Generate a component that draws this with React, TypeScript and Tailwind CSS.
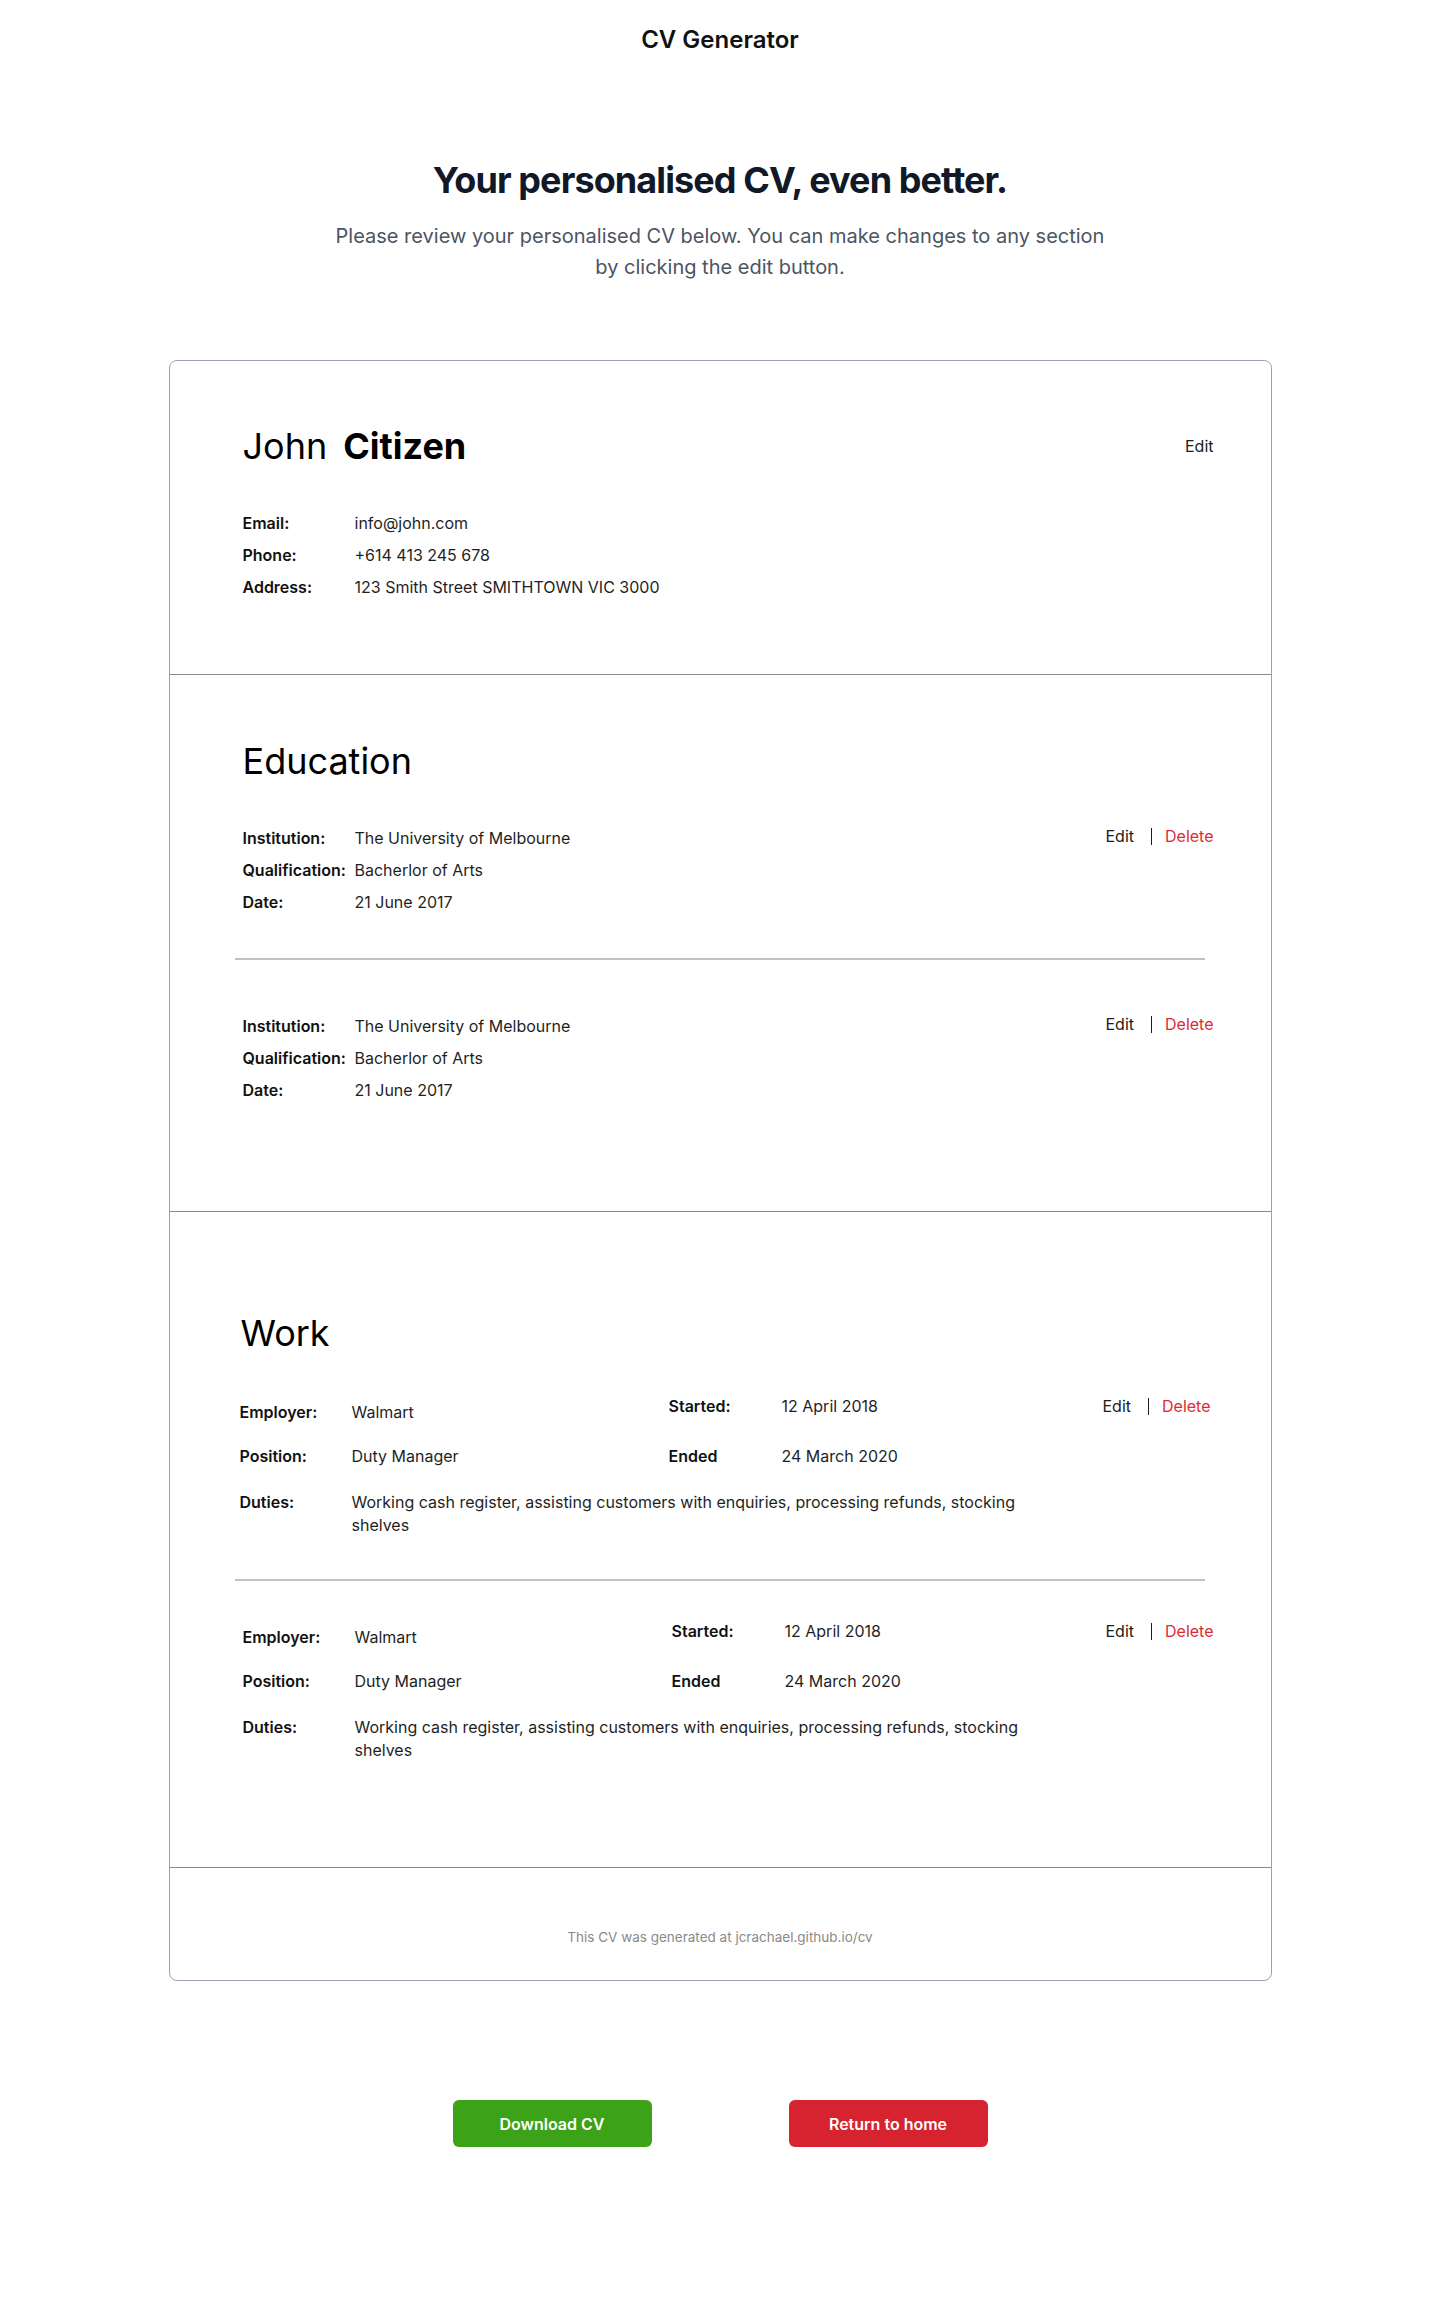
import React from "react";

type Row = { label: string; value: string };

function EditDelete({ onlyEdit = false }: { onlyEdit?: boolean }) {
  return (
    <div className="flex h-[22px] items-center text-[16px] leading-[22px]">
      <span className="text-[#1c1c1c]">Edit</span>
      {!onlyEdit && (
        <>
          <span className="ml-[17px] h-[17px] w-px bg-[#1c1c1c]" />
          <span className="ml-[13px] text-[#dc2b34]">Delete</span>
        </>
      )}
    </div>
  );
}

function Details({ rows }: { rows: Row[] }) {
  return (
    <div className="flex flex-col text-[16px]">
      {rows.map((r) => (
        <div key={r.label} className="flex h-8 items-center">
          <span className="w-[112px] shrink-0 font-semibold text-[#111]">{r.label}</span>
          <span className="text-[#1f1f1f]">{r.value}</span>
        </div>
      ))}
    </div>
  );
}

function Divider({ className = "" }: { className?: string }) {
  return <div className={`h-[2px] bg-[#c2c2c2] ${className}`} />;
}

function WorkItem({ className = "" }: { className?: string }) {
  return (
    <div className={`flex items-start text-[16px] leading-[22px] ${className}`}>
      <div className="flex-1">
        <div className="flex">
          <div className="w-[429px]">
            <div className="mt-[6px] flex">
              <span className="w-[112px] font-semibold text-[#111]">Employer:</span>
              <span>Walmart</span>
            </div>
            <div className="mt-[22px] flex">
              <span className="w-[112px] font-semibold text-[#111]">Position:</span>
              <span>Duty Manager</span>
            </div>
          </div>
          <div>
            <div className="flex">
              <span className="w-[113px] font-semibold text-[#111]">Started:</span>
              <span>12 April 2018</span>
            </div>
            <div className="mt-[28px] flex">
              <span className="w-[113px] font-semibold text-[#111]">Ended</span>
              <span>24 March 2020</span>
            </div>
          </div>
        </div>
        <div className="mt-[24px] flex">
          <span className="w-[112px] shrink-0 font-semibold text-[#111]">Duties:</span>
          <span className="max-w-[680px] leading-[23px]">
            Working cash register, assisting customers with enquiries, processing refunds, stocking shelves
          </span>
        </div>
      </div>
      <EditDelete />
    </div>
  );
}

export default function App() {
  const education: Row[] = [
    { label: "Institution:", value: "The University of Melbourne" },
    { label: "Qualification:", value: "Bacherlor of Arts" },
    { label: "Date:", value: "21 June 2017" },
  ];

  return (
    <div className="min-h-[2300px] bg-white font-[Inter,sans-serif] text-[#1f1f1f]">
      <header className="pt-[26px] text-center text-[24px] leading-[28px] font-semibold text-[#111]">
        CV Generator
      </header>

      <div className="mt-[106px] text-center">
        <h1 className="text-4xl leading-[40px] font-bold tracking-tight text-[#111827]">
          Your personalised CV, even better.
        </h1>
        <p className="mx-auto mt-[21px] max-w-[790px] text-xl leading-[31px] text-[#4b5563]">
          Please review your personalised CV below. You can make changes to any section by clicking the edit button.
        </p>
      </div>

      <div className="mx-auto mt-[77px] w-[1103px] rounded-lg border border-[#98a2b3]">
        {/* personal */}
        <section className="border-b border-[#8c8c8c] pt-[65px] pr-[57px] pb-[71px] pl-[73px]">
          <div className="flex h-10 items-center justify-between">
            <h2 className="flex gap-[16px] text-4xl leading-[40px] text-black">
              <span>John</span>
              <span className="font-bold">Citizen</span>
            </h2>
            <EditDelete onlyEdit />
          </div>
          <div className="mt-[41px]">
            <Details
              rows={[
                { label: "Email:", value: "info@john.com" },
                { label: "Phone:", value: "+614 413 245 678" },
                { label: "Address:", value: "123 Smith Street SMITHTOWN VIC 3000" },
              ]}
            />
          </div>
        </section>

        {/* education */}
        <section className="border-b border-[#8c8c8c] pt-[66px] pr-[57px] pb-[105px] pl-[73px]">
          <h2 className="text-4xl leading-[40px] text-black">Education</h2>
          <div className="mt-[41px] flex items-start justify-between">
            <Details rows={education} />
            <div className="mt-[3px]">
              <EditDelete />
            </div>
          </div>
          <Divider className="mt-[40px] ml-[-8px] mr-[9px]" />
          <div className="mt-[50px] flex items-start justify-between">
            <Details rows={education} />
            <div className="mt-[3px]">
              <EditDelete />
            </div>
          </div>
        </section>

        {/* work */}
        <section className="border-b border-[#8c8c8c] pt-[101px] pr-[60px] pb-[105px] pl-[70px]">
          <h2 className="pl-px text-4xl leading-[40px] text-black">Work</h2>
          <WorkItem className="mt-[42px]" />
          <Divider className="mt-[42px] ml-[-5px] mr-[6px]" />
          <WorkItem className="mt-[39px] ml-[3px] mr-[-3px]" />
        </section>

        <footer className="pt-[59px] pb-[33px] text-center text-[13.5px] leading-[20px] text-[#8a8a8a]">
          This CV was generated at jcrachael.github.io/cv
        </footer>
      </div>

      <div className="mt-[119px] flex justify-center gap-[137px] pb-[100px]">
        <button className="h-[47px] w-[199px] rounded-md bg-[#3ca318] text-base font-semibold text-white">
          Download CV
        </button>
        <button className="h-[47px] w-[199px] rounded-md bg-[#d6232f] text-base font-semibold text-white">
          Return to home
        </button>
      </div>
    </div>
  );
}
